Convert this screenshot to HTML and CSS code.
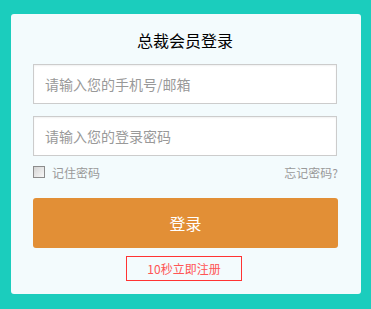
FILE: index.html
```html
<!DOCTYPE html>
<html lang="zh">
<head>
<meta charset="utf-8">
<link rel="stylesheet" href="styles.css">
</head>
<body>
<div class="card">
  <h1 class="title">总裁会员登录</h1>
  <input class="field" type="text" placeholder="请输入您的手机号/邮箱">
  <input class="field field-gap" type="password" placeholder="请输入您的登录密码">
  <div class="options">
    <label class="remember"><span class="box"></span>记住密码</label>
    <a class="forgot">忘记密码?</a>
  </div>
  <button class="submit">登录</button>
  <div class="reg-row"><a class="register">10秒立即注册</a></div>
</div>
</body>
</html>
```
FILE: styles.css
```css
* { box-sizing: border-box; }
html, body { margin: 0; padding: 0; }
body {
  background: #1bcdbd;
  width: 371px;
  height: 309px;
  padding: 14px 10px 0 11px;
  font-family: "Noto Sans CJK SC", "Noto Sans", sans-serif;
}
.card {
  background: #f3fbfd;
  width: 350px;
  height: 280px;
  border-radius: 3px;
  padding: 14px 24px 0 22px;
  display: flex;
  flex-direction: column;
}
.title {
  margin: 0 0 12px;
  font-size: 16px;
  font-weight: normal;
  line-height: 24px;
  text-align: center;
  color: #000;
}
.field {
  display: block;
  width: 304px;
  height: 40px;
  border: 1px solid #cccccc;
  background: #fff;
  padding: 0 11px;
  font-family: inherit;
  font-size: 14px;
  color: #333;
  outline: none;
  box-shadow: inset 0 1px 2px rgba(0,0,0,0.06);
}
.field::placeholder { color: #999; }
.field-gap { margin-top: 12px; }
.options {
  margin-top: 8px;
  height: 16px;
  display: flex;
  justify-content: space-between;
  align-items: center;
  font-size: 12px;
  color: #999;
}
.remember { display: flex; align-items: center; }
.box {
  width: 12px;
  height: 12px;
  border: 1px solid #8c8c8c;
  background: linear-gradient(135deg, #d4d4d4, #f8f8f8);
  margin-right: 7px;
}
.forgot { color: #999; margin-right: -1px; }
.submit {
  margin-top: 18px;
  width: 305px;
  height: 50px;
  border: none;
  border-radius: 3px;
  background: #e28f36;
  color: #fff;
  font-family: inherit;
  font-size: 16px;
  padding: 0;
}
.reg-row {
  margin-top: 8px;
  display: flex;
  justify-content: center;
  padding-right: 2px;
}
.register {
  width: 116px;
  height: 25px;
  border: 1px solid #f33;
  color: #f55;
  font-size: 12px;
  line-height: 23px;
  text-align: center;
}
```
